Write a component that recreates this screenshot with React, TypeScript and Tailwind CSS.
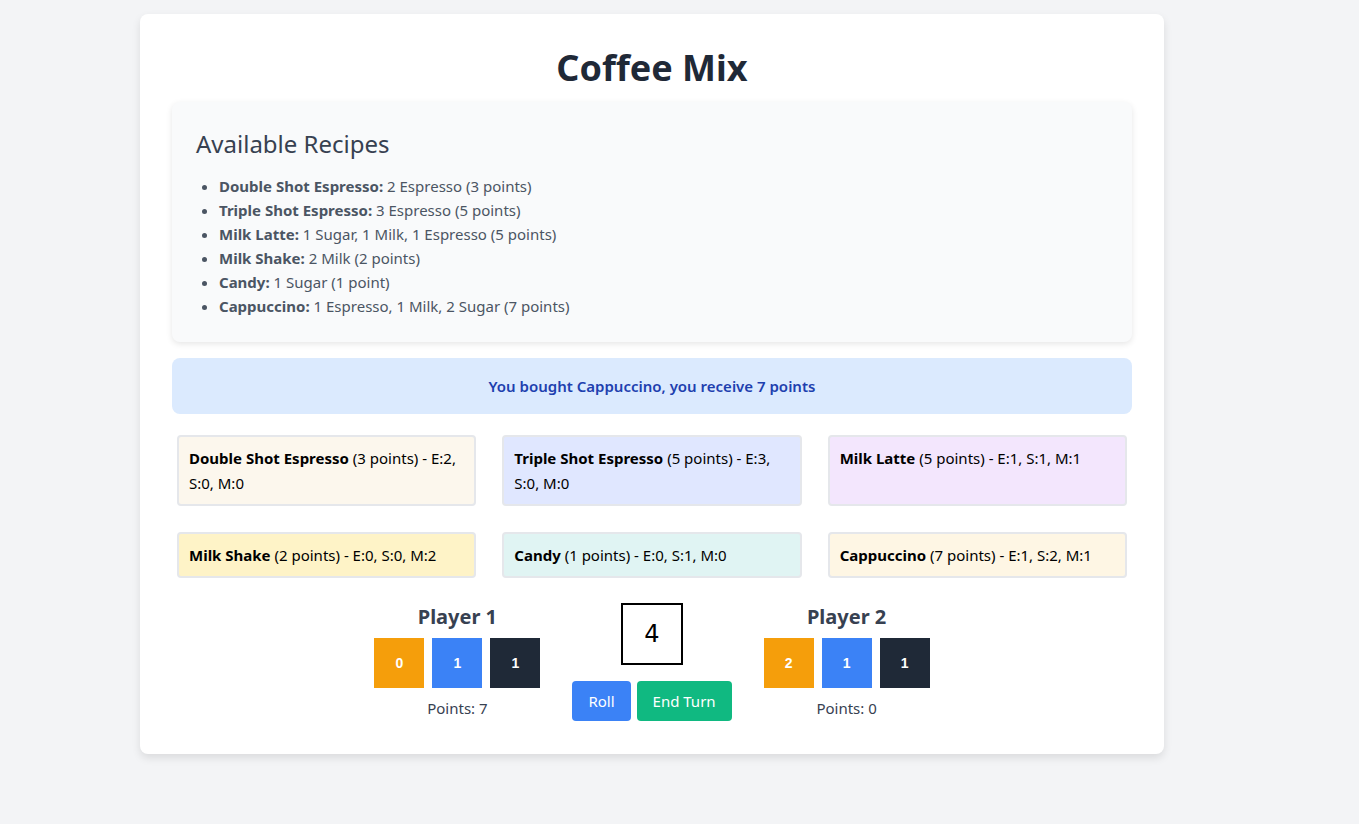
import React from "react";

const recipes = [
  { name: "Double Shot Espresso:", desc: "2 Espresso (3 points)" },
  { name: "Triple Shot Espresso:", desc: "3 Espresso (5 points)" },
  { name: "Milk Latte:", desc: "1 Sugar, 1 Milk, 1 Espresso (5 points)" },
  { name: "Milk Shake:", desc: "2 Milk (2 points)" },
  { name: "Candy:", desc: "1 Sugar (1 point)" },
  { name: "Cappuccino:", desc: "1 Espresso, 1 Milk, 2 Sugar (7 points)" },
];

const cards = [
  { name: "Double Shot Espresso", rest: " (3 points) - E:2, S:0, M:0", bg: "bg-[#fcf7ed]" },
  { name: "Triple Shot Espresso", rest: " (5 points) - E:3, S:0, M:0", bg: "bg-[#e0e7ff]" },
  { name: "Milk Latte", rest: " (5 points) - E:1, S:1, M:1", bg: "bg-[#f3e6fd]" },
  { name: "Milk Shake", rest: " (2 points) - E:0, S:0, M:2", bg: "bg-[#fef3c7]" },
  { name: "Candy", rest: " (1 points) - E:0, S:1, M:0", bg: "bg-[#e0f4f3]" },
  { name: "Cappuccino", rest: " (7 points) - E:1, S:2, M:1", bg: "bg-[#fef6e4]" },
];

function Player({ name, vals, points }: { name: string; vals: number[]; points: number }) {
  return (
    <div className="flex flex-col items-center">
      <h2 className="text-[20px] leading-[28px] font-bold text-[#374151] mb-[7px]">{name}</h2>
      <div className="flex gap-2">
        {["bg-[#f59e0b]", "bg-[#3b82f6]", "bg-[#1f2937]"].map((c, i) => (
          <div
            key={i}
            className={`${c} w-[50px] h-[50px] flex items-center justify-center text-white font-bold text-[14px]`}
            style={{ fontFamily: '"Liberation Sans", Arial, sans-serif' }}
          >
            {vals[i]}
          </div>
        ))}
      </div>
      <div className="mt-2 text-[15px] leading-6 text-[#374151]">Points: {points}</div>
    </div>
  );
}

export default function App() {
  return (
    <div
      className="min-h-screen bg-[#f3f4f6] pt-[14px]"
      style={{ fontFamily: '"Noto Sans", "Open Sans", sans-serif' }}
    >
      <div className="ml-[140px] w-[1024px] bg-white rounded-lg shadow-[0_4px_8px_rgba(0,0,0,0.1)] px-8 pt-8 pb-[33px]">
        <h1 className="text-[36px] leading-[44px] font-bold text-[#1f2937] text-center mb-3">Coffee Mix</h1>

        <div className="bg-[#f9fafb] rounded-lg shadow-[0_2px_6px_rgba(0,0,0,0.1)] p-6 mb-4">
          <h2 className="text-[24px] leading-[36px] text-[#374151] mb-3">Available Recipes</h2>
          <ul className="list-disc pl-[23px] text-[15px] leading-6 text-[#4b5563]">
            {recipes.map((r) => (
              <li key={r.name}>
                <strong className="font-bold">{r.name}</strong> {r.desc}
              </li>
            ))}
          </ul>
        </div>

        <div className="bg-[#dbeafe] rounded-lg py-4 text-center text-[15px] leading-6 font-semibold text-[#1e40af] mb-4">
          You bought Cappuccino, you receive 7 points
        </div>

        <div className="grid grid-cols-3 gap-x-4 gap-y-4">
          {cards.map((c) => (
            <div
              key={c.name}
              className={`${c.bg} m-[5px] border-2 border-[#e5e7eb] rounded-[4px] px-[10px] py-[8.5px] text-[15px] leading-[25px] text-black`}
            >
              <strong className="font-bold">{c.name}</strong>
              {c.rest}
            </div>
          ))}
        </div>

        <div className="mt-[20px] flex justify-center gap-8">
          <Player name="Player 1" vals={[0, 1, 1]} points={7} />
          <div className="flex flex-col items-center">
            <div
              className="w-[62px] h-[62px] border-2 border-black flex items-center justify-center text-[24px] text-black"
              style={{ fontFamily: '"DejaVu Sans", sans-serif' }}
            >
              4
            </div>
            <div className="mt-4 flex gap-1.5">
              <button className="bg-[#3b82f6] text-white rounded-[4px] px-4 py-2 text-[15px] leading-6">Roll</button>
              <button className="bg-[#10b981] text-white rounded-[4px] px-4 py-2 text-[15px] leading-6">End Turn</button>
            </div>
          </div>
          <Player name="Player 2" vals={[2, 1, 1]} points={0} />
        </div>
      </div>
    </div>
  );
}
